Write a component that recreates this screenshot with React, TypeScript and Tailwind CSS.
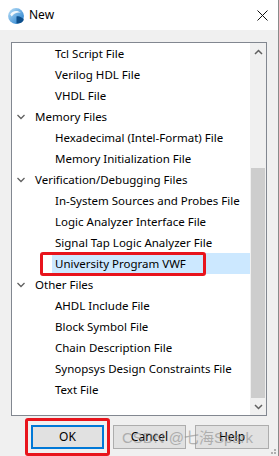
import React from "react";

type Row = { label: string; group?: boolean; selected?: boolean };

const rows: Row[] = [
    { label: "Tcl Script File" },
    { label: "Verilog HDL File" },
    { label: "VHDL File" },
    { label: "Memory Files", group: true },
    { label: "Hexadecimal (Intel-Format) File" },
    { label: "Memory Initialization File" },
    { label: "Verification/Debugging Files", group: true },
    { label: "In-System Sources and Probes File" },
    { label: "Logic Analyzer Interface File" },
    { label: "Signal Tap Logic Analyzer File" },
    { label: "University Program VWF", selected: true },
    { label: "Other Files", group: true },
    { label: "AHDL Include File" },
    { label: "Block Symbol File" },
    { label: "Chain Description File" },
    { label: "Synopsys Design Constraints File" },
    { label: "Text File" },
];

const Chevron = () => (
    <svg width="8" height="6" viewBox="0 0 8 6" className="text-[#606060]">
        <path d="M0.5 1 L4 4.5 L7.5 1" fill="none" stroke="currentColor" strokeWidth="1.3" />
    </svg>
);

function AppIcon() {
    return (
        <svg width="18" height="18" viewBox="0 0 17 17">
            <defs>
                <linearGradient id="g" x1="0" y1="0" x2="1" y2="1">
                    <stop offset="0" stopColor="#bfe3fa" />
                    <stop offset="1" stopColor="#1877c9" />
                </linearGradient>
            </defs>
            <circle cx="8.5" cy="8.5" r="7.5" fill="url(#g)" />
            <path d="M3 7 C4.5 3.5 10 2.5 13 5.5 C10 4.8 6.5 5.8 4.5 9 Z" fill="#ffffff" opacity="0.9" />
            <path d="M9 9 C11 8 14 9.5 16 12 C14.5 15 11.5 16 9 15.5 Z" fill="#0d4f8c" />
        </svg>
    );
}

export default function App() {
    return (
        <div
            className="relative w-[279px] h-[456px] bg-[#f0f0f0] border-r border-[#8a8a8a] flex flex-col overflow-hidden text-black"
            style={{ fontFamily: '"Noto Sans", "Segoe UI", sans-serif' }}
        >
            {/* title bar */}
            <div className="h-[30px] bg-white flex items-center shrink-0">
                <div className="ml-[7px] mt-[1px]">
                    <AppIcon />
                </div>
                <span className="ml-[4px] text-[12px]">New</span>
                <svg width="11" height="11" viewBox="0 0 11 11" className="ml-auto mr-[10px]">
                    <path d="M0.5 0.5 L10.5 10.5 M10.5 0.5 L0.5 10.5" stroke="#111" strokeWidth="1" />
                </svg>
            </div>

            {/* list box */}
            <div className="ml-[11px] mt-[12px] w-[256px] h-[374px] bg-white border border-[#828790] flex">
                <div className="relative flex-1 flex flex-col">
                    {rows.map((r) =>
                        r.group ? (
                            <div key={r.label} className="h-[21px] pt-[1px] flex items-center text-[11.5px] shrink-0">
                                <span className="ml-[5px] w-[18px]">
                                    <Chevron />
                                </span>
                                <span>{r.label}</span>
                            </div>
                        ) : (
                            <div
                                key={r.label}
                                className={
                                    "h-[21px] pt-[1px] ml-[40px] pl-[3px] flex items-center text-[11.5px] shrink-0 whitespace-nowrap " +
                                    (r.selected ? "bg-[#cce8ff]" : "")
                                }
                            >
                                {r.label}
                            </div>
                        )
                    )}
                    {/* annotation */}
                    <div className="absolute left-[28px] top-[209px] w-[166px] h-[24px] border-[3px] border-[#e8141c] rounded-[3px]" />
                </div>

                {/* scrollbar */}
                <div className="w-[16px] bg-[#f0f0f0] flex flex-col">
                    <div className="h-[17px] flex items-center justify-center">
                        <svg width="9" height="6" viewBox="0 0 9 6">
                            <path d="M1 5 L4.5 1.5 L8 5" fill="none" stroke="#606060" strokeWidth="1.5" />
                        </svg>
                    </div>
                    <div className="h-[108px]" />
                    <div className="flex-1 bg-[#cdcdcd] mx-[1px]" />
                    <div className="h-[17px] flex items-center justify-center">
                        <svg width="9" height="6" viewBox="0 0 9 6">
                            <path d="M1 1 L4.5 4.5 L8 1" fill="none" stroke="#606060" strokeWidth="1.5" />
                        </svg>
                    </div>
                </div>
            </div>

            {/* buttons */}
            <div className="mt-[9px] ml-[31px] flex gap-[9px] text-[12px]">
                <div className="relative w-[73px] h-[24px] bg-[#e1e1e1] border-2 border-[#0078d7] flex items-center justify-center">
                    OK
                    <div className="absolute -left-[8px] -top-[9px] w-[85px] h-[38px] border-[3px] border-[#e8141c] rounded-[3px]" />
                </div>
                <div className="w-[73px] h-[24px] bg-[#e1e1e1] border border-[#adadad] flex items-center justify-center">
                    Cancel
                </div>
                <div className="w-[74px] h-[24px] bg-[#e1e1e1] border border-[#adadad] flex items-center justify-center">
                    Help
                </div>
            </div>

            {/* watermark */}
            <div
                className="absolute left-[122px] top-[427px] text-[15px] text-[#8c8c8c] opacity-60 whitespace-nowrap"
                style={{ fontFamily: '"Liberation Sans", "Noto Sans CJK SC", sans-serif' }}
            >
                CSDN @七海Spark
            </div>

            {/* resize grip */}
            <div className="absolute right-[2px] bottom-[2px] grid grid-cols-2 gap-[1px]">
                <span />
                <span className="w-[2px] h-[2px] bg-[#b0b0b0]" />
                <span className="w-[2px] h-[2px] bg-[#b0b0b0]" />
                <span className="w-[2px] h-[2px] bg-[#b0b0b0]" />
            </div>
        </div>
    );
}
